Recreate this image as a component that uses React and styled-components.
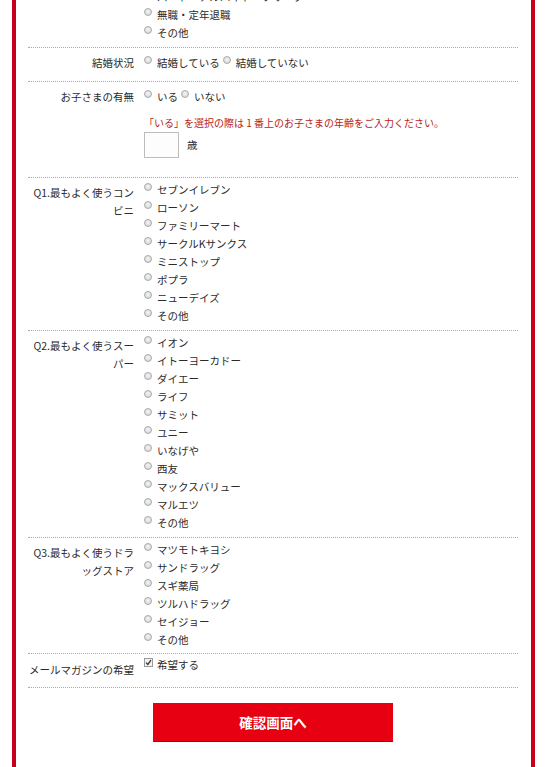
import React from 'react';
import styled, { createGlobalStyle } from 'styled-components';

const GlobalStyle = createGlobalStyle`
    html, body {
        margin: 0;
        padding: 0;
        background: #fff;
    }
    body {
        font-family: "Noto Sans CJK JP", "Noto Sans", sans-serif;
        font-size: 10.5px;
        color: #2b2b2b;
        overflow: hidden;
    }
`;

const Frame = styled.div`
    margin: -105px 12px 0;
    border-left: 4px solid #c8001e;
    border-right: 4px solid #c8001e;
    padding: 0 13px 40px 12px;
`;

const Row = styled.div`
    display: flex;
    align-items: flex-start;
    padding: ${(p) => p.$pt}px 0 ${(p) => p.$pb}px;
    border-bottom: 1px dotted #a8a8a8;
`;

const Label = styled.div`
    flex: none;
    width: 106px;
    text-align: right;
    line-height: 18px;
    margin-top: ${(p) => p.$shift || 0}px;
`;

const Value = styled.div`
    flex: 1;
    margin-left: 10px;
    line-height: 18px;
`;

const InlineGroup = styled.div`
    display: flex;
    gap: 3px;
    height: 18px;
`;

const Option = styled.label`
    display: flex;
    align-items: flex-start;
    height: 18px;
    white-space: nowrap;
`;

const Radio = styled.input.attrs({ type: 'radio' })`
    appearance: none;
    flex: none;
    width: 8px;
    height: 8px;
    margin: 2px 5px 0 0;
    border: 1px solid #a9a9a9;
    border-radius: 50%;
    background: radial-gradient(circle at 50% 40%, #f4f4f4 0%, #d2d2d2 100%);
    box-sizing: border-box;
`;

const CheckBox = styled.span`
    flex: none;
    display: inline-flex;
    align-items: center;
    justify-content: center;
    width: 9px;
    height: 9px;
    margin: 2px 4px 0 0;
    border: 1px solid #9a9a9a;
    background: #f2f2f2;
    box-sizing: border-box;
`;

const Note = styled.div`
    margin-top: 8px;
    font-size: 10px;
    line-height: 18px;
    color: #b81c1c;
    white-space: nowrap;
`;

const AgeField = styled.div`
    display: flex;
    align-items: center;
    gap: 8px;
`;

const AgeInput = styled.input`
    width: 35px;
    height: 26px;
    box-sizing: border-box;
    margin: 0;
    border: 1px solid #bdbdbd;
    background: #fdfdfd;
    font: inherit;
`;

const ButtonArea = styled.div`
    display: flex;
    justify-content: center;
    padding-top: 15px;
`;

const SubmitButton = styled.button`
    width: 240px;
    height: 39px;
    border: none;
    border-bottom: 1px solid #a8000f;
    background: #e60012;
    color: #fff;
    font-family: "Noto Sans CJK JP", sans-serif;
    font-size: 13.5px;
    font-weight: bold;
    cursor: pointer;
`;

const jobs = ['会社員', '公務員', '自営業', '専業主婦・主夫', '学生', 'パート・アルバイト・フリーター', '無職・定年退職', 'その他'];
const conbini = ['セブンイレブン', 'ローソン', 'ファミリーマート', 'サークルKサンクス', 'ミニストップ', 'ポプラ', 'ニューデイズ', 'その他'];
const supers = ['イオン', 'イトーヨーカドー', 'ダイエー', 'ライフ', 'サミット', 'ユニー', 'いなげや', '西友', 'マックスバリュー', 'マルエツ', 'その他'];
const drugs = ['マツモトキヨシ', 'サンドラッグ', 'スギ薬局', 'ツルハドラッグ', 'セイジョー', 'その他'];

const RadioList = ({ name, items }) => (
    <Value>
        {items.map((item) => (
            <Option key={item}>
                <Radio name={name} />
                {item}
            </Option>
        ))}
    </Value>
);

const App = () => {
    return (
        <>
            <GlobalStyle />
            <Frame>
                <Row $pt={3} $pb={5}>
                    <Label $shift={3}>職業</Label>
                    <RadioList name="job" items={jobs} />
                </Row>
                <Row $pt={6} $pb={9}>
                    <Label>結婚状況</Label>
                    <Value>
                        <InlineGroup>
                            <Option><Radio name="marry" />結婚している</Option>
                            <Option><Radio name="marry" />結婚していない</Option>
                        </InlineGroup>
                    </Value>
                </Row>
                <Row $pt={6} $pb={19}>
                    <Label>お子さまの有無</Label>
                    <Value>
                        <InlineGroup>
                            <Option><Radio name="child" />いる</Option>
                            <Option><Radio name="child" />いない</Option>
                        </InlineGroup>
                        <Note>「いる」を選択の際は 1 番上のお子さまの年齢をご入力ください。</Note>
                        <AgeField>
                            <AgeInput type="text" />
                            歳
                        </AgeField>
                    </Value>
                </Row>
                <Row $pt={3} $pb={5}>
                    <Label $shift={3}>Q1.最もよく使うコンビニ</Label>
                    <RadioList name="q1" items={conbini} />
                </Row>
                <Row $pt={3} $pb={5}>
                    <Label $shift={3}>Q2.最もよく使うスーパー</Label>
                    <RadioList name="q2" items={supers} />
                </Row>
                <Row $pt={3} $pb={4}>
                    <Label $shift={3}>Q3.最もよく使うドラッグストア</Label>
                    <RadioList name="q3" items={drugs} />
                </Row>
                <Row $pt={2} $pb={8}>
                    <Label $shift={5}>メールマガジンの希望</Label>
                    <Value>
                        <Option>
                            <CheckBox>
                                <svg width="7" height="7" viewBox="0 0 7 7">
                                    <path d="M1 3.6 L2.8 5.4 L6 1.2" fill="none" stroke="#333" strokeWidth="1.3" />
                                </svg>
                            </CheckBox>
                            希望する
                        </Option>
                    </Value>
                </Row>
                <ButtonArea>
                    <SubmitButton type="button">確認画面へ</SubmitButton>
                </ButtonArea>
            </Frame>
        </>
    );
};

export default App;
